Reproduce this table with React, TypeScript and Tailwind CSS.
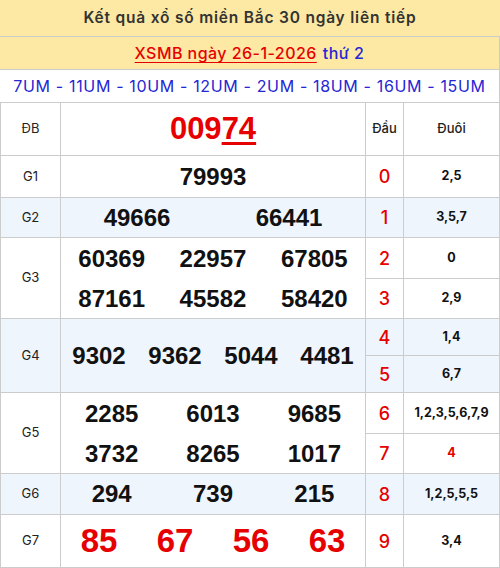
import React from "react";

const UI = "font-['Inter',sans-serif]";
const NUM = "font-['Liberation_Sans',Arial,sans-serif] font-bold";

type Sub = { dau: string; duoi: string; duoiRed?: boolean; h: string };

function RightCol({ subs }: { subs: Sub[] }) {
  return (
    <div className="flex flex-1 flex-col">
      {subs.map((s, i) => (
        <div
          key={i}
          className={`flex ${s.h} ${i < subs.length - 1 ? "border-b border-[#cccccc]" : ""}`}
        >
          <div
            className={`flex w-[38px] items-center justify-center border-r border-[#cccccc] ${UI} text-[18px] font-medium text-[#e60000]`}
          >
            {s.dau}
          </div>
          <div
            className={`flex flex-1 items-center justify-center ${UI} text-[12.5px] font-bold ${
              s.duoiRed ? "text-[#e60000]" : "text-[#111]"
            }`}
          >
            {s.duoi}
          </div>
        </div>
      ))}
    </div>
  );
}

function Line({
  nums,
  cls,
  h,
}: {
  nums: string[];
  cls: string;
  h: string;
}) {
  return (
    <div className={`grid ${h} items-center`} style={{ gridTemplateColumns: `repeat(${nums.length}, minmax(0, 1fr))` }}>
      {nums.map((n, i) => (
        <div key={i} className={`text-center ${NUM} ${cls}`}>
          {n}
        </div>
      ))}
    </div>
  );
}

function PrizeRow({
  label,
  blue,
  main,
  subs,
}: {
  label: string;
  blue?: boolean;
  main: React.ReactNode;
  subs: Sub[];
}) {
  return (
    <div
      className={`flex border-b border-l border-r border-[#cccccc] ${blue ? "bg-[#eef5fd]" : "bg-white"}`}
    >
      <div
        className={`flex w-[60px] items-center justify-center border-r border-[#cccccc] ${UI} text-[13px] text-[#222]`}
      >
        {label}
      </div>
      <div className="flex w-[305px] flex-col justify-center border-r border-[#cccccc]">{main}</div>
      <RightCol subs={subs} />
    </div>
  );
}

export default function App() {
  return (
    <div className="w-[500px] bg-white">
      <div
        className={`flex h-[37px] items-center justify-center border-b border-[#cccccc] bg-[#fde9a3] ${UI} text-[15.5px] font-semibold tracking-[0.8px] text-[#333]`}
      >
        Kết quả xổ số miền Bắc 30 ngày liên tiếp
      </div>
      <div
        className={`flex h-[33px] items-center justify-center border-b border-r border-[#cccccc] bg-[#fde9a3] ${UI} text-[16px] font-medium tracking-[0.45px]`}
      >
        <span className="text-[#e60000] underline underline-offset-[3px]">XSMB ngày 26-1-2026</span>
        <span className="ml-[6px] text-[#2626d4]">thứ 2</span>
      </div>
      <div
        className={`flex h-[33px] items-center justify-center border-b border-r border-[#cccccc] bg-white ${UI} text-[16px] tracking-[0.65px] text-[#2626d4]`}
      >
        7UM - 11UM - 10UM - 12UM - 2UM - 18UM - 16UM - 15UM
      </div>

      {/* ĐB */}
      <div className="flex border-b border-l border-r border-[#cccccc] bg-white">
        <div
          className={`flex w-[60px] items-center justify-center border-r border-[#cccccc] ${UI} text-[13px] text-[#222]`}
        >
          ĐB
        </div>
        <div className="flex h-[52px] w-[305px] items-center justify-center border-r border-[#cccccc]">
          <span className={`${NUM} text-[31px] text-[#e60000]`}>
            009
            <span className="underline decoration-[3px] underline-offset-[3px]">74</span>
          </span>
        </div>
        <div className={`flex w-[38px] items-center justify-center border-r border-[#cccccc] ${UI} text-[13px] font-medium text-[#222]`}>
          Đầu
        </div>
        <div className={`flex flex-1 items-center justify-center ${UI} text-[13px] font-medium text-[#222]`}>
          Đuôi
        </div>
      </div>

      <PrizeRow
        label="G1"
        main={<Line nums={["79993"]} cls="text-[24px] text-[#111]" h="h-[41px]" />}
        subs={[{ dau: "0", duoi: "2,5", h: "h-[41px]" }]}
      />
      <PrizeRow
        label="G2"
        blue
        main={<Line nums={["49666", "66441"]} cls="text-[24px] text-[#111]" h="h-[39px]" />}
        subs={[{ dau: "1", duoi: "3,5,7", h: "h-[39px]" }]}
      />
      <PrizeRow
        label="G3"
        main={
          <>
            <Line nums={["60369", "22957", "67805"]} cls="text-[24px] text-[#111]" h="h-[41px]" />
            <Line nums={["87161", "45582", "58420"]} cls="text-[24px] text-[#111]" h="h-[39px]" />
          </>
        }
        subs={[
          { dau: "2", duoi: "0", h: "h-[41px]" },
          { dau: "3", duoi: "2,9", h: "h-[39px]" },
        ]}
      />
      <PrizeRow
        label="G4"
        blue
        main={<Line nums={["9302", "9362", "5044", "4481"]} cls="text-[24px] text-[#111]" h="h-[73px]" />}
        subs={[
          { dau: "4", duoi: "1,4", h: "h-[37px]" },
          { dau: "5", duoi: "6,7", h: "h-[36px]" },
        ]}
      />
      <PrizeRow
        label="G5"
        main={
          <>
            <Line nums={["2285", "6013", "9685"]} cls="text-[24px] text-[#111]" h="h-[41px]" />
            <Line nums={["3732", "8265", "1017"]} cls="text-[24px] text-[#111]" h="h-[39px]" />
          </>
        }
        subs={[
          { dau: "6", duoi: "1,2,3,5,6,7,9", h: "h-[41px]" },
          { dau: "7", duoi: "4", duoiRed: true, h: "h-[39px]" },
        ]}
      />
      <PrizeRow
        label="G6"
        blue
        main={<Line nums={["294", "739", "215"]} cls="text-[24px] text-[#111]" h="h-[40px]" />}
        subs={[{ dau: "8", duoi: "1,2,5,5,5", h: "h-[40px]" }]}
      />
      <PrizeRow
        label="G7"
        main={<Line nums={["85", "67", "56", "63"]} cls="text-[33px] text-[#e60000]" h="h-[52px]" />}
        subs={[{ dau: "9", duoi: "3,4", h: "h-[52px]" }]}
      />
    </div>
  );
}
